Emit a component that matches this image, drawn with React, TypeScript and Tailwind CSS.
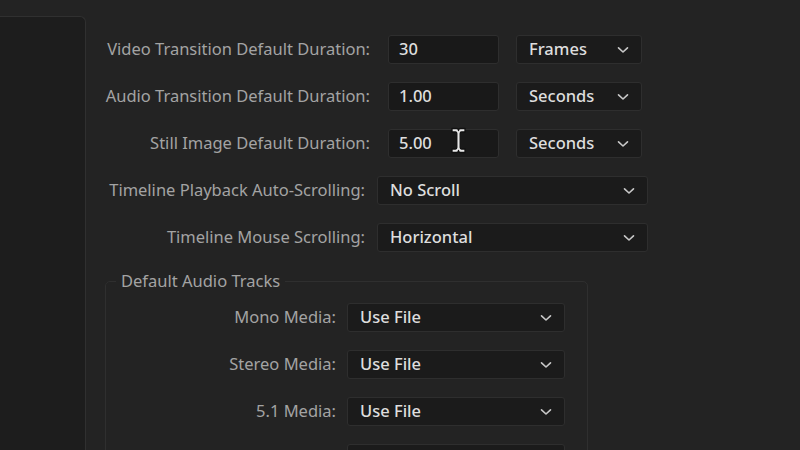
import React from "react";

const font = { fontFamily: '"Noto Sans", "Open Sans", sans-serif' };

function Chevron() {
  return (
    <svg width="12" height="8" viewBox="0 0 12 8" className="shrink-0">
      <path d="M1.5 1.8 L6 6 L10.5 1.8" fill="none" stroke="#c8c8c8" strokeWidth="1.6" strokeLinecap="round" strokeLinejoin="round" />
    </svg>
  );
}

function Select({ value, w }: { value: string; w: string }) {
  return (
    <div
      className={`${w} h-[29px] flex items-center justify-between pl-[12px] pr-[12px] rounded-[3px] bg-[#1b1b1b] border border-[#2e2e2e] text-[#dedede] text-[16.5px] font-medium`}
    >
      <span>{value}</span>
      <Chevron />
    </div>
  );
}

function Field({ value, children }: { value: string; children?: React.ReactNode }) {
  return (
    <div className="relative w-[111px] h-[29px] flex items-center pl-[10px] rounded-[3px] bg-[#191919] border border-[#2e2e2e] text-[#dedede] text-[16.5px] font-medium">
      {value}
      {children}
    </div>
  );
}

function IBeam() {
  // text cursor hovering over the still image field
  return (
    <svg width="17" height="27" viewBox="0 0 17 27" className="absolute left-[61px] top-[-3px]">
      <path
        d="M2 1.5 H6.5 Q8.5 1.5 8.5 3.5 Q8.5 1.5 10.5 1.5 H15 V5 H11.5 Q10.2 5 10.2 6.5 V20.5 Q10.2 22 11.5 22 H15 V25.5 H10.5 Q8.5 25.5 8.5 23.5 Q8.5 25.5 6.5 25.5 H2 V22 H5.5 Q6.8 22 6.8 20.5 V6.5 Q6.8 5 5.5 5 H2 Z"
        fill="#e8e8e8"
        stroke="#111"
        strokeWidth="1.3"
        strokeLinejoin="round"
      />
    </svg>
  );
}

const durations = [
  { label: "Video Transition Default Duration:", value: "30", unit: "Frames" },
  { label: "Audio Transition Default Duration:", value: "1.00", unit: "Seconds" },
  { label: "Still Image Default Duration:", value: "5.00", unit: "Seconds", cursor: true },
];

const timeline = [
  { label: "Timeline Playback Auto-Scrolling:", value: "No Scroll" },
  { label: "Timeline Mouse Scrolling:", value: "Horizontal" },
];

const tracks = [
  { label: "Mono Media:", value: "Use File" },
  { label: "Stereo Media:", value: "Use File" },
  { label: "5.1 Media:", value: "Use File" },
];

export default function App() {
  return (
    <div className="w-[800px] h-[450px] overflow-hidden flex bg-[#232323]" style={font}>
      <div className="w-[86px] shrink-0 mt-[16px] h-[460px] bg-[#1d1d1d] border-t border-r border-[#303030] rounded-tr-[6px]" />

      <div className="flex-1 flex flex-col pt-[35px] gap-[18px]">
        {durations.map((d) => (
          <div key={d.label} className="flex items-center h-[29px]">
            <div className="w-[284px] text-right text-[16.5px] text-[#a3a3a3] whitespace-nowrap">{d.label}</div>
            <div className="ml-[18px]">
              <Field value={d.value}>{d.cursor && <IBeam />}</Field>
            </div>
            <div className="ml-[17px]">
              <Select value={d.unit} w="w-[126px]" />
            </div>
          </div>
        ))}

        {timeline.map((t) => (
          <div key={t.label} className="flex items-center h-[29px]">
            <div className="w-[279px] text-right text-[16.5px] text-[#a3a3a3] whitespace-nowrap">{t.label}</div>
            <div className="ml-[12px]">
              <Select value={t.value} w="w-[271px]" />
            </div>
          </div>
        ))}

        <fieldset className="ml-[19px] mt-[1px] w-[483px] border border-[#2f2f2f] rounded-[5px] pt-[12px] pb-[20px] flex flex-col gap-[18px]">
          <legend className="ml-[10px] px-[5px] text-[16.5px] leading-[20px] text-[#a3a3a3]">Default Audio Tracks</legend>
          {tracks.map((t) => (
            <div key={t.label} className="flex items-center h-[29px]">
              <div className="w-[230px] text-right text-[16.5px] text-[#a3a3a3] whitespace-nowrap">{t.label}</div>
              <div className="ml-[11px]">
                <Select value={t.value} w="w-[218px]" />
              </div>
            </div>
          ))}
          {/* next row, only its top edge shows at the bottom of the window */}
          <div className="flex h-[29px]">
            <div className="ml-[241px] w-[218px] h-[29px] rounded-[3px] bg-[#1b1b1b] border border-[#2e2e2e]" />
          </div>
        </fieldset>
      </div>
    </div>
  );
}
